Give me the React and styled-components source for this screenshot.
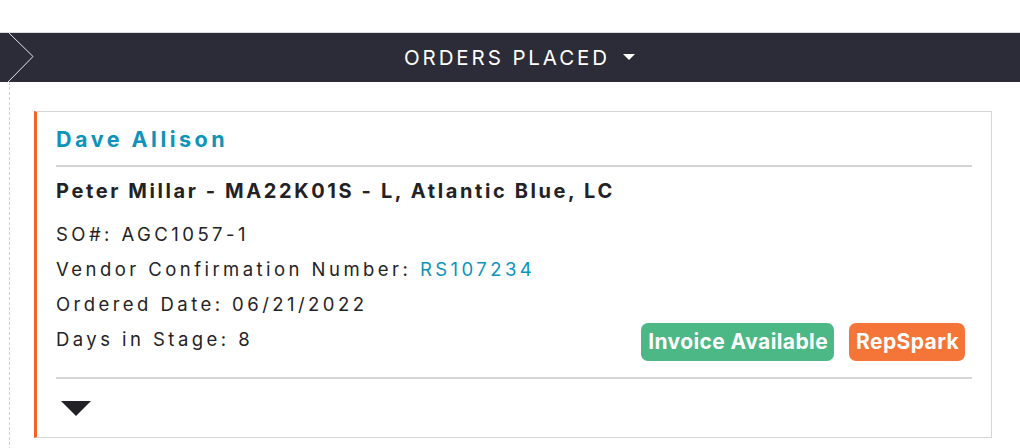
import React from 'react';
import styled, { createGlobalStyle } from 'styled-components';

const GlobalStyle = createGlobalStyle`
  body {
    margin: 0;
    background: #fff;
    font-family: Inter, "Open Sans", sans-serif;
    color: #222226;
  }
`;

const Page = styled.div`
  padding-top: 32px;
  width: 1020px;
  height: 448px;
  overflow: hidden;
  box-sizing: border-box;
`;

const StageBar = styled.div`
  position: relative;
  height: 50px;
  border-top: 1px solid #dcdce0;
  background: #2c2c38;
  display: flex;
  align-items: center;
  justify-content: center;
  padding-left: 19px;
  gap: 13px;
  box-sizing: border-box;
`;

const Chevron = styled.svg`
  position: absolute;
  left: 0;
  top: -1px;
`;

const StageTitle = styled.span`
  color: #fff;
  font-size: 20.5px;
  letter-spacing: 2.9px;
  font-weight: 400;
`;

const Caret = styled.span`
  width: 0;
  height: 0;
  border-left: 6px solid transparent;
  border-right: 6px solid transparent;
  border-top: 6px solid #fff;
  margin-top: -2px;
`;

const Lane = styled.div`
  margin-left: 9px;
  border-left: 1px dashed #cfcfd4;
  padding: 29px 28px 12px 24px;
`;

const OrderCard = styled.div`
  border: 1px solid #d6d6d8;
  border-left: 3px solid #f4621f;
  padding: 12px 19px 0 19px;
  height: 327px;
  box-sizing: border-box;
`;

const Customer = styled.div`
  color: #0e93bb;
  font-size: 21.5px;
  font-weight: 700;
  letter-spacing: 3.5px;
  line-height: 30px;
  padding-bottom: 11px;
  border-bottom: 2px solid #d4d4d6;
`;

const Product = styled.div`
  font-size: 20px;
  font-weight: 700;
  letter-spacing: 2.6px;
  line-height: 24px;
  margin-top: 12px;
  margin-bottom: 14px;
`;

const Line = styled.div`
  display: flex;
  align-items: flex-start;
  justify-content: space-between;
  font-size: 18.5px;
  letter-spacing: 3.45px;
  line-height: 35px;
  color: #232327;
`;

const Link = styled.span`
  color: #0e93bb;
`;

const Badges = styled.div`
  display: flex;
  gap: 15px;
  margin: 1px 7px -4px 0;
`;

const Badge = styled.span`
  background: ${p => p.$color};
  color: #fff;
  font-weight: 700;
  font-size: 21px;
  letter-spacing: 0.4px;
  height: 38px;
  line-height: 38px;
  padding: 0 6px 0 7px;
  border-radius: 7px;
`;

const Footer = styled.div`
  margin-top: 20px;
  border-top: 2px solid #d6d6d8;
  padding: 22px 0 0 5px;
`;

const Expand = styled.span`
  display: block;
  width: 0;
  height: 0;
  border-left: 15px solid transparent;
  border-right: 15px solid transparent;
  border-top: 15px solid #222226;
`;

export default function App() {
  return (
    <Page>
      <GlobalStyle />
      <StageBar>
        <Chevron width="40" height="51" viewBox="0 0 40 51">
          <polyline points="9,1 33,24.5 7,51" fill="none" stroke="#e4e4ea" strokeWidth="1" />
        </Chevron>
        <StageTitle>ORDERS PLACED</StageTitle>
        <Caret />
      </StageBar>
      <Lane>
        <OrderCard>
          <Customer>Dave Allison</Customer>
          <Product>Peter Millar - MA22K01S - L, Atlantic Blue, LC</Product>
          <Line>SO#: AGC1057-1</Line>
          <Line>
            <span>Vendor Confirmation Number: <Link>RS107234</Link></span>
          </Line>
          <Line>Ordered Date: 06/21/2022</Line>
          <Line>
            <span>Days in Stage: 8</span>
            <Badges>
              <Badge $color="#4cb886">Invoice Available</Badge>
              <Badge $color="#f47537">RepSpark</Badge>
            </Badges>
          </Line>
          <Footer>
            <Expand />
          </Footer>
        </OrderCard>
      </Lane>
    </Page>
  );
}
